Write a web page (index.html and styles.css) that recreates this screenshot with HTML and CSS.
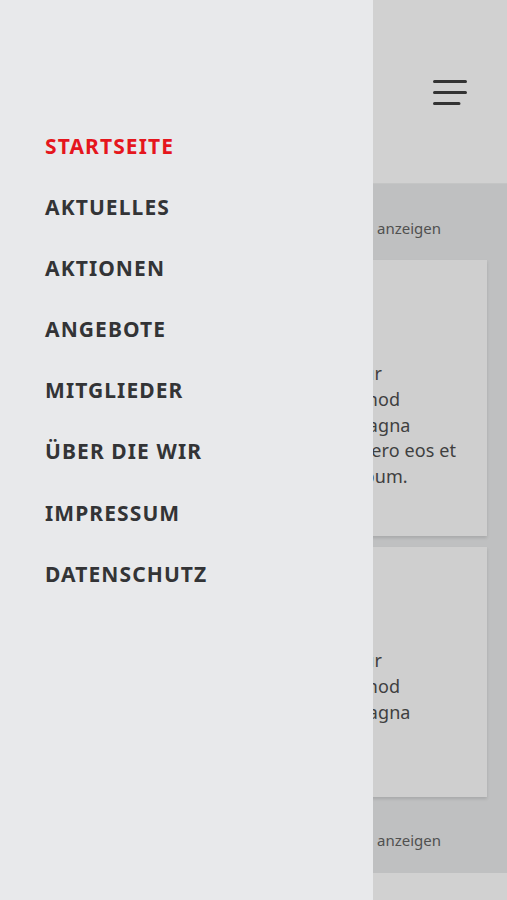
FILE: index.html
```html
<!DOCTYPE html>
<html lang="de">
<head>
<meta charset="utf-8">
<title>Menü</title>
<link rel="stylesheet" href="styles.css">
</head>
<body>
<div class="page">
  <header class="header">
    <button class="burger" aria-label="Menü">
      <svg width="34" height="26" viewBox="0 0 34 26">
        <path d="M1.5 2.5H32.5M1.5 13.5H32.5M1.5 24.5H26" stroke="#333" stroke-width="3" stroke-linecap="round" fill="none"/>
      </svg>
    </button>
  </header>
  <main class="content">
    <div class="more">Alle anzeigen</div>
    <article class="card card-a">
      <p class="card-text">Lorem ipsum dolor sit amet, consetetur<br>sadipscing elitr, sed diam nonumy eirmod<br>tempor invidunt ut labore et dolore magna<br>aliquyam erat, sed diam voluptua. At vero eos et<br>accusam et justo duo dolores et ea rebum.</p>
    </article>
    <article class="card card-b">
      <p class="card-text">Lorem ipsum dolor sit amet, consetetur<br>sadipscing elitr, sed diam nonumy eirmod<br>tempor invidunt ut labore et dolore magna</p>
    </article>
    <div class="more more-b">Alle anzeigen</div>
  </main>
  <footer class="footer"></footer>
</div>
<nav class="drawer">
  <ul class="menu">
    <li class="item active">STARTSEITE</li>
    <li class="item">AKTUELLES</li>
    <li class="item">AKTIONEN</li>
    <li class="item">ANGEBOTE</li>
    <li class="item">MITGLIEDER</li>
    <li class="item">ÜBER DIE WIR</li>
    <li class="item">IMPRESSUM</li>
    <li class="item">DATENSCHUTZ</li>
  </ul>
</nav>
</body>
</html>
```
FILE: styles.css
```css
* { box-sizing: border-box; }
html, body { margin: 0; padding: 0; }
body {
  width: 507px;
  height: 900px;
  overflow: hidden;
  font-family: "Noto Sans", Lato, sans-serif;
  background: #bfc0c1;
}
.page {
  display: flex;
  flex-direction: column;
  height: 900px;
}
.header {
  height: 184px;
  flex: none;
  background: #d1d1d1;
  border-bottom: 1px solid #c4c5c5;
  display: flex;
  justify-content: flex-end;
  padding: 79px 40px 0 0;
}
.burger {
  border: 0;
  background: none;
  padding: 0;
  width: 34px;
  height: 26px;
  display: block;
}
.burger svg { display: block; }
.content {
  flex: 1;
  padding: 0 20px;
  background: #bfc0c1;
}
.more {
  font-size: 15px;
  color: #505050;
  text-align: right;
  padding: 34px 46px 0 0;
  height: 76px;
}
.more-b { padding-top: 33px; }
.card {
  background: #cfcfcf;
  box-shadow: 0 2px 3px rgba(0,0,0,0.12);
  margin: 0;
}
.card-a { height: 276px; padding-top: 101px; margin-bottom: 11px; }
.card-b { height: 250px; padding-top: 101px; }
.card-text {
  margin: 0;
  padding: 0 24px;
  font-size: 18px;
  letter-spacing: 0.1px;
  line-height: 25.8px;
  color: #3f3f3f;
  white-space: nowrap;
}
.footer {
  height: 27px;
  flex: none;
  background: #d1d1d1;
}
.drawer {
  position: fixed;
  left: 0;
  top: 0;
  width: 373px;
  height: 900px;
  background: #e8e9eb;
  padding: 132px 0 0 45px;
}
.menu {
  list-style: none;
  margin: 0;
  padding: 0;
  display: flex;
  flex-direction: column;
  gap: 33.1px;
}
.item {
  font-size: 21px;
  font-weight: 700;
  letter-spacing: 1.1px;
  line-height: 28px;
  color: #333436;
}
.item.active { color: #e5161d; }
```
